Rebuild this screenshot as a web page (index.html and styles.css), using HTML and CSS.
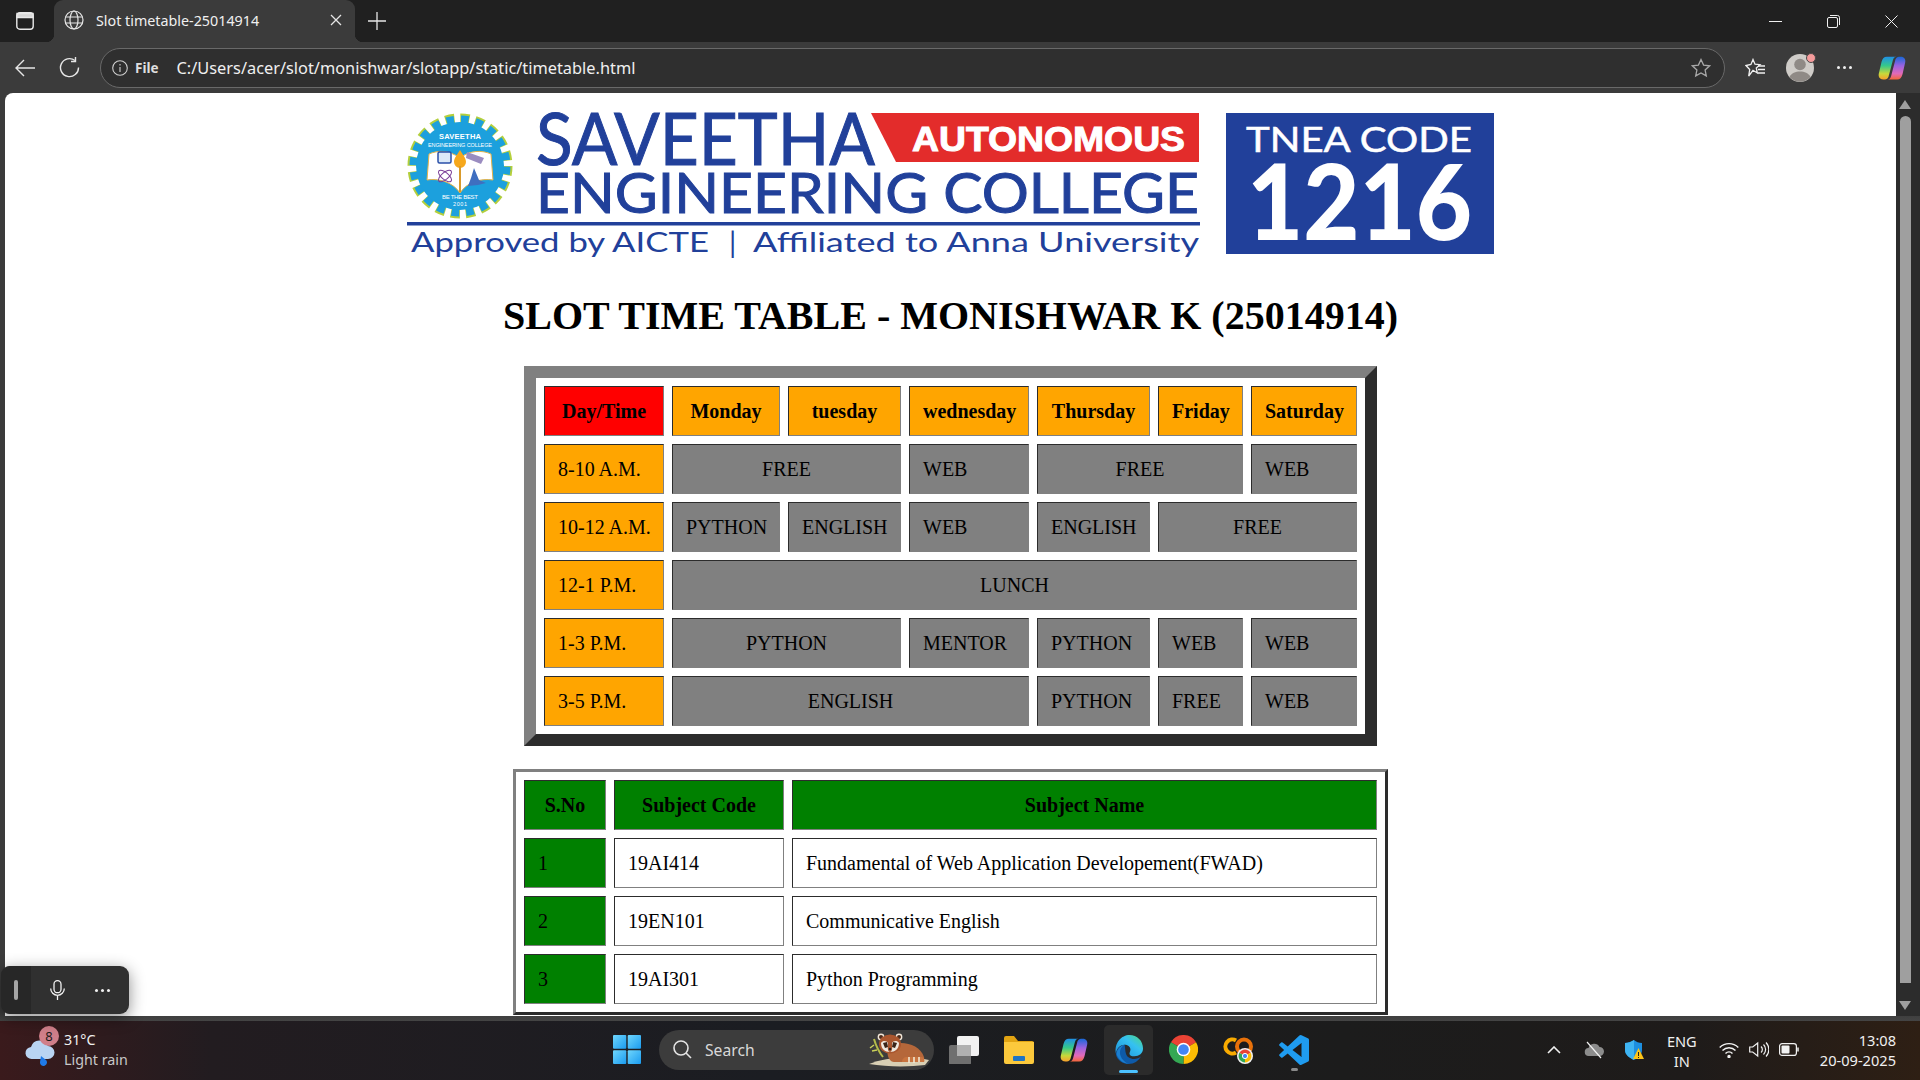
FILE: index.html
```html
<!DOCTYPE html>
<html lang="en">
<head>
  <meta charset="UTF-8" />
  <title>Slot timetable-25014914</title>
  <link rel="stylesheet" href="styles.css">
</head>
<body>
  <svg class="defs" width="0" height="0">
    <defs>
      <linearGradient id="copilotLeft" x1="0" y1="0" x2="0" y2="1">
        <stop offset="0" stop-color="#1f8fe8"/><stop offset=".4" stop-color="#35c98a"/><stop offset=".75" stop-color="#c8d83a"/><stop offset="1" stop-color="#f8a12c"/>
      </linearGradient>
      <linearGradient id="copilotRight" x1="0" y1="0" x2="0" y2="1">
        <stop offset="0" stop-color="#1668d8"/><stop offset=".4" stop-color="#9a63e0"/><stop offset=".75" stop-color="#e26ab8"/><stop offset="1" stop-color="#f4663a"/>
      </linearGradient>
      <linearGradient id="edgeTop" x1="0" y1="1" x2="1" y2="0">
        <stop offset="0" stop-color="#1b8fd8"/><stop offset=".6" stop-color="#35c1f1"/><stop offset="1" stop-color="#4fd97a"/>
      </linearGradient>
      <linearGradient id="winTile" x1="0" y1="0" x2="1" y2="1">
        <stop offset="0" stop-color="#6fd6fc"/><stop offset="1" stop-color="#1a9bf0"/>
      </linearGradient>
      <symbol id="copilot" viewBox="0 0 32 32">
        <path fill="url(#copilotLeft)" d="M10 3h11c-2 0-3 1-4 4l-5 19c-1 2-2 3-4 3H6c-4 0-6-3-5-7l3-13c1-4 3-6 6-6z"/>
        <path fill="url(#copilotRight)" d="M22 29H11c2 0 3-1 4-4l5-19c1-2 2-3 4-3h2c4 0 6 3 5 7l-3 13c-1 4-3 6-6 6z"/>
      </symbol>
    </defs>
  </svg>

  <div class="desktop">

    <!-- ================== Tab strip ================== -->
    <header class="tabstrip">
      <svg class="sidebar-btn" width="18" height="18" viewBox="0 0 18 18" fill="none" stroke="#e8e8e8" stroke-width="1.4">
        <rect x=".8" y=".8" width="16.4" height="16.4" rx="3"/>
        <path d="M1 5.500h16M1 1.500h16v4H1z" fill="#d8d8d8"/>
      </svg>
      <div class="tab">
        <svg width="20" height="20" viewBox="0 0 20 20" fill="none" stroke="#e6e6e6" stroke-width="1.2">
          <circle cx="10" cy="10" r="9"/>
          <ellipse cx="10" cy="10" rx="4" ry="9"/>
          <path d="M1.500 7h17M1.500 13h17"/>
        </svg>
        <span class="tab-title">Slot timetable-25014914</span>
        <svg class="tab-close" width="12" height="12" viewBox="0 0 12 12" stroke="#e6e6e6" stroke-width="1.3">
          <path d="M1 1l10 10M11 1L1 11"/>
        </svg>
      </div>
      <svg class="new-tab" width="18" height="18" viewBox="0 0 18 18" stroke="#e6e6e6" stroke-width="1.3">
        <path d="M9 0v18M0 9h18"/>
      </svg>
      <div class="window-btns">
        <svg width="13" height="13" viewBox="0 0 13 13" stroke="#f0f0f0"><path d="M0 6.500h13"/></svg>
        <svg width="13" height="13" viewBox="0 0 13 13" fill="none" stroke="#f0f0f0">
          <rect x=".5" y="2.500" width="10" height="10" rx="1.500"/>
          <path d="M3 .5h7.500a2 2 0 0 1 2 2V10"/>
        </svg>
        <svg width="13" height="13" viewBox="0 0 13 13" stroke="#f0f0f0"><path d="M.5.5l12 12M12.500.5l-12 12"/></svg>
      </div>
    </header>

    <!-- ================== Address bar ================== -->
    <nav class="toolbar">
      <svg class="back" width="20" height="20" viewBox="0 0 20 20" fill="none" stroke="#e6e6e6" stroke-width="1.4">
        <path d="M20 10H1M9 2l-8 8 8 8"/>
      </svg>
      <svg class="reload" width="21" height="21" viewBox="0 0 21 21" fill="none" stroke="#e6e6e6" stroke-width="1.4">
        <path d="M16 3.500A9 9 0 1 0 19.500 10.500"/>
        <path d="M16.500 0v4.500H12"/>
      </svg>
      <div class="address">
        <svg width="16" height="16" viewBox="0 0 16 16" fill="none" stroke="#d0d0d0" stroke-width="1.1">
          <circle cx="8" cy="8" r="7.300"/>
          <path d="M8 7v5M8 4v1.500"/>
        </svg>
        <span class="file-label">File</span>
        <span class="url">C:/Users/acer/slot/monishwar/slotapp/static/timetable.html</span>
        <svg class="star" width="20" height="20" viewBox="0 0 20 20" fill="none" stroke="#a8a8a8" stroke-width="1.3">
          <path d="M10 1.500l2.600 5.600 6 .7-4.500 4.100 1.200 6L10 15l-5.300 2.900 1.200-6L1.400 7.800l6-.7z"/>
        </svg>
      </div>
      <svg class="favs" width="20" height="20" viewBox="0 0 20 20" fill="none" stroke="#f0f0f0" stroke-width="1.3">
        <path d="M8 1.500l2 4.700 5 .5-3.700 3.300 1 5L8 12.300 3.700 18l1-6.500L1 7.500l4.900-1z"/>
        <path d="M13 8h7M13 11.500h7M13 15h7"/>
      </svg>
      <div class="avatar">
        <svg width="28" height="28" viewBox="0 0 28 28">
          <circle cx="14" cy="14" r="14" fill="#cfccc8"/>
          <circle cx="14" cy="10.500" r="5.800" fill="#8f8a86"/>
          <path d="M3.500 23c2-4 6-5.500 10.500-5.500S22.500 19 24.500 23A14 14 0 0 1 3.500 23z" fill="#8f8a86"/>
        </svg>
        <span class="avatar-dot"></span>
      </div>
      <div class="more-dots"><i></i><i></i><i></i></div>
      <svg class="copilot-btn" width="28" height="28"><use href="#copilot"/></svg>
    </nav>

    <div class="browser-body">
      <main class="page">
        <svg class="banner" width="1087" height="165" viewBox="0 -15 1087 165">
          <!-- college seal -->
          <circle cx="53" cy="58" r="47" fill="none" stroke="#b4cf3c" stroke-width="11" stroke-dasharray="9 5.760"/>
          <circle cx="53" cy="58" r="46" fill="none" stroke="#1ca0dd" stroke-width="9" stroke-dasharray="7.500 6.950" stroke-dashoffset="-.7"/>
          <circle cx="53" cy="58" r="44" fill="#1ca0dd"/>
          <path d="M22 46c9-4 20-4 31 4 10-8 22-8 31-4l2 26c-12-2-26 2-33 13-7-11-22-15-33-13z" fill="#fff" stroke="#e3b34a"/>
          <rect x="31" y="44" width="13" height="11" rx="1.500" fill="#dbe9f8" stroke="#2a4fa8" stroke-width="1.500"/>
          <path d="M60 44l17 6-3 6-15-6z" fill="#9a8cc0"/>
          <ellipse cx="38" cy="68" rx="8" ry="3.500" fill="none" stroke="#7b3f98" transform="rotate(40 38 68)"/>
          <ellipse cx="38" cy="68" rx="8" ry="3.500" fill="none" stroke="#7b3f98" transform="rotate(-40 38 68)"/>
          <path d="M67 60l5 12 7 3-8 2-10 1 3-8z" fill="#3f6fc0"/>
          <path d="M53 42c3 5 6 8 6 12a6 6 0 0 1-12 0c0-4 3-7 6-12z" fill="#f6a81c"/>
          <rect x="52" y="58" width="2" height="26" fill="#d99a2b"/>
          <text class="seal-text" x="53" y="31" text-anchor="middle" font-size="7.500" font-weight="700" textLength="42">SAVEETHA</text>
          <text class="seal-text" x="53" y="39" text-anchor="middle" font-size="5.500" textLength="64">ENGINEERING COLLEGE</text>
          <text class="seal-text" x="53" y="91" text-anchor="middle" font-size="6" textLength="36">BE THE BEST</text>
          <text class="seal-text" x="53" y="98" text-anchor="middle" font-size="5.500" textLength="14">2001</text>

          <!-- wordmark -->
          <text class="mark" x="129" y="57" font-size="72" textLength="339" lengthAdjust="spacingAndGlyphs">SAVEETHA</text>
          <polygon points="464,5 792,5 792,54 489,54" fill="#e32c2b"/>
          <text class="mark-red" x="505" y="43" font-size="35" textLength="273" lengthAdjust="spacingAndGlyphs">AUTONOMOUS</text>
          <text class="mark" x="129" y="105" font-size="56" textLength="663" lengthAdjust="spacingAndGlyphs">ENGINEERING COLLEGE</text>
          <rect x="0" y="114" width="793" height="3.500" fill="#21409a"/>
          <text class="mark-thin" x="4" y="144" font-size="26" textLength="298" lengthAdjust="spacingAndGlyphs">Approved by AICTE</text>
          <text class="mark-thin" x="322" y="145" font-size="29">|</text>
          <text class="mark-thin" x="346" y="144" font-size="26" textLength="446" lengthAdjust="spacingAndGlyphs">Affiliated to Anna University</text>

          <!-- code box -->
          <rect x="819" y="5" width="268" height="141" fill="#21409a"/>
          <text class="code-small" x="839" y="44" font-size="35" textLength="226" lengthAdjust="spacingAndGlyphs">TNEA CODE</text>
          <text class="code-big" x="840" y="132" font-size="104" textLength="225" lengthAdjust="spacingAndGlyphs">1216</text>
        </svg>

        <h1 class="title">SLOT TIME TABLE - MONISHWAR K (25014914)</h1>

        <!-- ================== Time table ================== -->
        <table class="slots">
          <colgroup>
            <col class="c-day"><col class="c-mon"><col class="c-tue"><col class="c-wed"><col class="c-thu"><col class="c-fri"><col class="c-sat">
          </colgroup>
          <tr>
            <th class="red">Day/Time</th>
            <th class="orange">Monday</th>
            <th class="orange">tuesday</th>
            <th class="orange">wednesday</th>
            <th class="orange">Thursday</th>
            <th class="orange">Friday</th>
            <th class="orange">Saturday</th>
          </tr>
          <tr>
            <td class="orange">8-10 A.M.</td>
            <td class="gray mid" colspan="2">FREE</td>
            <td class="gray">WEB</td>
            <td class="gray mid" colspan="2">FREE</td>
            <td class="gray">WEB</td>
          </tr>
          <tr>
            <td class="orange">10-12 A.M.</td>
            <td class="gray">PYTHON</td>
            <td class="gray">ENGLISH</td>
            <td class="gray">WEB</td>
            <td class="gray">ENGLISH</td>
            <td class="gray mid" colspan="2">FREE</td>
          </tr>
          <tr>
            <td class="orange">12-1 P.M.</td>
            <td class="gray mid" colspan="6">LUNCH</td>
          </tr>
          <tr>
            <td class="orange">1-3 P.M.</td>
            <td class="gray mid" colspan="2">PYTHON</td>
            <td class="gray">MENTOR</td>
            <td class="gray">PYTHON</td>
            <td class="gray">WEB</td>
            <td class="gray">WEB</td>
          </tr>
          <tr>
            <td class="orange">3-5 P.M.</td>
            <td class="gray mid" colspan="3">ENGLISH</td>
            <td class="gray">PYTHON</td>
            <td class="gray">FREE</td>
            <td class="gray">WEB</td>
          </tr>
        </table>

        <!-- ================== Subject list ================== -->
        <table class="subjects">
          <colgroup>
            <col class="c-sno"><col class="c-code"><col class="c-name">
          </colgroup>
          <tr>
            <th class="green">S.No</th>
            <th class="green">Subject Code</th>
            <th class="green">Subject Name</th>
          </tr>
          <tr>
            <td class="green">1</td>
            <td>19AI414</td>
            <td>Fundamental of Web Application Developement(FWAD)</td>
          </tr>
          <tr>
            <td class="green">2</td>
            <td>19EN101</td>
            <td>Communicative English</td>
          </tr>
          <tr>
            <td class="green">3</td>
            <td>19AI301</td>
            <td>Python Programming</td>
          </tr>
        </table>
      </main>

      <div class="scrollbar">
        <span class="arrow-up"></span>
        <span class="thumb"></span>
        <span class="arrow-down"></span>
      </div>
    </div>

    <!-- ================== Taskbar ================== -->
    <footer class="taskbar">
      <div class="weather">
        <div class="weather-icon">
          <svg width="30" height="28" viewBox="0 0 30 28">
            <path d="M7 20a6 6 0 0 1-1-12 9 9 0 0 1 17-1 6.500 6.500 0 0 1 0 13z" fill="#b9d4f2"/>
            <path d="M16 17l5 4a3.500 3.500 0 1 1-6 2z" fill="#1f7ae8"/>
          </svg>
          <span class="badge">8</span>
        </div>
        <div class="weather-text">
          <span>31°C</span>
          <span class="weather-sub">Light rain</span>
        </div>
      </div>

      <div class="apps">
        <svg class="app-win" width="28" height="29" viewBox="0 0 28 29" fill="url(#winTile)">
          <rect width="13.300" height="13.800" rx="1"/><rect x="14.700" width="13.300" height="13.800" rx="1"/>
          <rect y="15.200" width="13.300" height="13.800" rx="1"/><rect x="14.700" y="15.200" width="13.300" height="13.800" rx="1"/>
        </svg>
        <div class="search-pill">
          <svg width="19" height="19" viewBox="0 0 19 19" fill="none" stroke="#e4e4e4" stroke-width="1.600">
            <circle cx="8" cy="8" r="7"/><path d="M13 13l5 5"/>
          </svg>
          <span class="search-label">Search</span>
          <svg class="panda" width="62" height="34" viewBox="0 0 62 34">
            <path d="M6 6c2 7 5 13 9 18" stroke="#b5bb4a" stroke-width="2" fill="none"/>
            <path d="M6 12l-4 3M9 17l-5 1" stroke="#c9cf5a" stroke-width="1.500"/>
            <path d="M1 31c14-6 42-9 60-4l-4 5c-16 2-38 2-56-1z" fill="#d9cfb4"/>
            <path d="M22 12c12-5 30-1 34 12 1 3-2 5-5 5H26c-6 0-9-12-4-17z" fill="#b5673a"/>
            <path d="M34 29c0-3 2-5 5-5h14c3 0 4 3 3 5z" fill="#c9743f"/>
            <path d="M41 24v6M46 24v6M51 24v5" stroke="#f0e6d2" stroke-width="1.600"/>
            <circle cx="13" cy="4" r="3.400" fill="#f0e6d8"/><circle cx="31" cy="4" r="3.400" fill="#f0e6d8"/>
            <circle cx="13" cy="4" r="2" fill="#4a2a1a"/><circle cx="31" cy="4" r="2" fill="#4a2a1a"/>
            <ellipse cx="22" cy="11" rx="11" ry="9.500" fill="#a9562e"/>
            <path d="M13 10c2-3 6-2 7 0 0 4-1 8 2 9-5 0-9-3-9-9zM31 10c-2-3-6-2-7 0 0 4 1 8-2 9 5 0 9-3 9-9z" fill="#efe9df"/>
            <path d="M15 10l4-1 1 5-3 1zM29 10l-4-1-1 5 3 1z" fill="#3a2418"/>
            <circle cx="22" cy="16" r="1.300" fill="#222"/>
          </svg>
        </div>
        <svg class="app-view" width="30" height="28" viewBox="0 0 30 28">
          <rect x="0" y="9" width="22" height="20" rx="2" fill="#6f6f6f"/>
          <rect x="8" y="0" width="22" height="20" rx="2" fill="#f2f2f2"/>
          <rect x="8" y="9" width="14" height="11" fill="#b0b0b0"/>
        </svg>
        <svg class="app-files" width="30" height="28" viewBox="0 0 30 28">
          <path d="M0 2a2 2 0 0 1 2-2h8l4 5h14a2 2 0 0 1 2 2v3H0z" fill="#e2a412"/>
          <path d="M0 6h30v20a2 2 0 0 1-2 2H2a2 2 0 0 1-2-2z" fill="#fcc93c"/>
          <rect x="9" y="20" width="12" height="5" rx="1" fill="#1f74c4"/>
        </svg>
        <svg class="app-copilot" width="28" height="28"><use href="#copilot"/></svg>
        <div class="app-edge">
          <svg width="31" height="31" viewBox="0 0 32 32">
            <path d="M3 20C1 9 9 1 17 1c8 0 14 6 14 14 0 5-4 8-9 8-3 0-5-1-5-3 0-1 1-2 1-4 0-3-3-5-6-5-5 0-8 4-9 9z" fill="url(#edgeTop)"/>
            <path d="M12 11c-6 1-9 6-9 10 1 6 7 10 13 10 6 0 10-3 13-8-3 3-9 4-13 1-4-3-3-9-4-13z" fill="#0e5aa8"/>
            <path d="M12 11c-4 2-6 7-4 12 1 3 4 6 8 8-5-1-9-3-12-9-1-5 3-10 8-11z" fill="#1b7fd0"/>
          </svg>
          <span class="run-bar"></span>
        </div>
        <svg class="app-chrome" width="29" height="29" viewBox="0 0 30 30">
          <path d="M15 15L2 7.500A15 15 0 0 1 28 7.500z" fill="#ea4335"/>
          <path d="M15 15L28 7.500A15 15 0 0 1 15 30z" fill="#fbbc04"/>
          <path d="M15 15L15 30A15 15 0 0 1 2 7.500z" fill="#34a853"/>
          <circle cx="15" cy="15" r="7" fill="#fff"/>
          <circle cx="15" cy="15" r="5.500" fill="#4285f4"/>
        </svg>
        <div class="app-colab">
          <svg width="31" height="30" viewBox="0 0 31 30">
            <path d="M13 5.500a7 7 0 1 0 0 12" fill="none" stroke="#f9ab00" stroke-width="4"/>
            <circle cx="21" cy="11.500" r="7" fill="none" stroke="#e8710a" stroke-width="4"/>
            <circle cx="22" cy="21" r="8" fill="#f2f2f2"/>
            <path d="M22 21l-5.600-3.200A6.500 6.500 0 0 1 27.600 17.800z" fill="#ea4335"/>
            <path d="M22 21l5.600-3.200A6.500 6.500 0 0 1 22 27.500z" fill="#fbbc04"/>
            <path d="M22 21v6.500a6.500 6.500 0 0 1-5.600-9.700z" fill="#34a853"/>
            <circle cx="22" cy="21" r="2.600" fill="#4285f4" stroke="#fff"/>
          </svg>
        </div>
        <div class="app-code">
          <svg width="30" height="30" viewBox="0 0 100 100">
            <path fill="#1f9cf0" d="M96 11L75 1a6 6 0 0 0-7 1L29 38 12 25a4 4 0 0 0-5 0l-5 5a4 4 0 0 0 0 6l15 14L2 64a4 4 0 0 0 0 6l5 5a4 4 0 0 0 5 0l17-13 39 36a6 6 0 0 0 7 1l21-10a6 6 0 0 0 4-6V17a6 6 0 0 0-4-6zM75 73L45 50l30-23z"/>
          </svg>
          <span class="open-dot"></span>
        </div>
      </div>

      <div class="tray">
        <svg width="14" height="8" viewBox="0 0 14 8" fill="none" stroke="#f0f0f0" stroke-width="1.600"><path d="M1 7l6-6 6 6"/></svg>
        <svg class="tray-cloud" width="20" height="18" viewBox="0 0 20 18">
          <path d="M5 15a4 4 0 0 1-.5-8 6 6 0 0 1 11-1 4.500 4.500 0 0 1 0 9z" fill="#8c8c8c"/>
          <path d="M3 1l14 16" stroke="#f2f2f2" stroke-width="1.200"/>
        </svg>
        <svg class="tray-shield" width="19" height="20" viewBox="0 0 19 20">
          <path d="M9 0c2 2 5 3 8 3v7c0 5-4 8-8 10-4-2-9-5-9-10V3c3 0 6-1 9-3z" fill="#1d8fe0"/>
          <path d="M9 0v20c-4-2-9-5-9-10V3c3 0 6-1 9-3z" fill="#3fb4f2"/>
          <path d="M13.500 8l5.500 11H8z" fill="#fcc419"/>
          <path d="M13.500 12v4M13.500 17v1" stroke="#222"/>
        </svg>
        <div class="lang"><span>ENG</span><span>IN</span></div>
        <svg class="tray-wifi" width="20" height="16" viewBox="0 0 20 16" fill="none" stroke="#f2f2f2" stroke-width="1.400">
          <path d="M.7 5.500a13 13 0 0 1 18.600 0M3.500 8.500a9 9 0 0 1 13 0M6.500 11.500a5 5 0 0 1 7 0"/>
          <circle cx="10" cy="14.500" r="1" fill="#f2f2f2"/>
        </svg>
        <svg class="tray-sound" width="20" height="17" viewBox="0 0 20 17" fill="none" stroke="#f2f2f2" stroke-width="1.200">
          <path d="M.7 6v5h3l5 4V2l-5 4z"/>
          <path d="M12 5.500a4 4 0 0 1 0 6M14.500 3.500a7 7 0 0 1 0 10M17 1.500a10 10 0 0 1 0 14"/>
        </svg>
        <svg class="tray-battery" width="20" height="13" viewBox="0 0 20 13" fill="none" stroke="#f2f2f2" stroke-width="1.200">
          <rect x=".6" y=".6" width="16.800" height="11.800" rx="2.500"/>
          <rect x="2.500" y="2.500" width="8" height="8" rx="1" fill="#f2f2f2" stroke="none"/>
          <path d="M19 4.500v4" stroke-width="1.500"/>
        </svg>
        <div class="clock"><span>13:08</span><span>20-09-2025</span></div>
      </div>
    </footer>

    <!-- floating voice access bar -->
    <div class="voice-bar">
      <div class="voice-grip"><span></span></div>
      <svg class="voice-mic" width="15" height="20" viewBox="0 0 15 20" fill="none" stroke="#f2f2f2" stroke-width="1.300">
        <rect x="4" y=".7" width="7" height="12" rx="3.500"/>
        <path d="M.7 8.500a6.800 6.800 0 0 0 13.600 0M7.500 15.500V20"/>
      </svg>
      <div class="more-dots voice-dots"><i></i><i></i><i></i></div>
    </div>
  </div>
</body>
</html>
```

FILE: styles.css
```css
html,
body {
  margin: 0;
  height: 100%;
  overflow: hidden;
}
body {
  font-family: "Noto Sans", "Open Sans", sans-serif;
  background: #202020;
  color: #f0f0f0;
}
svg {
  display: block;
  flex: none;
}
.defs {
  position: absolute;
}
.desktop {
  position: relative;
  display: flex;
  flex-direction: column;
  height: 1080px;
}

/* tab strip */
.tabstrip {
  display: flex;
  align-items: center;
  height: 42px;
  padding-left: 16px;
  background: #202020;
}
.tab {
  position: relative;
  display: flex;
  align-items: center;
  align-self: flex-end;
  box-sizing: border-box;
  width: 301px;
  height: 42px;
  margin-left: 20px;
  padding: 0 13px 2px 10px;
  background: #3b3b3b;
  border-radius: 9px 9px 0 0;
}
.tab::before,
.tab::after {
  content: "";
  position: absolute;
  bottom: 0;
  width: 8px;
  height: 8px;
}
.tab::before {
  left: -8px;
  background: radial-gradient(circle at 0 0, #202020 8px, #3b3b3b 8.500px);
}
.tab::after {
  right: -8px;
  background: radial-gradient(circle at 100% 0, #202020 8px, #3b3b3b 8.500px);
}
.tab-title {
  margin-left: 12px;
  font-size: 14.300px;
  white-space: nowrap;
}
.tab-close {
  margin-left: auto;
}
.new-tab {
  margin-left: 13px;
}
.window-btns {
  display: flex;
  gap: 45px;
  margin-left: auto;
  padding-right: 22px;
}

/* address bar */
.toolbar {
  display: flex;
  align-items: center;
  height: 51px;
  padding-left: 15px;
  background: #3b3b3b;
}
.reload {
  margin-left: 24px;
}
.address {
  display: flex;
  align-items: center;
  box-sizing: border-box;
  width: 1625px;
  height: 40px;
  margin-left: 20px;
  padding: 0 13px 0 11px;
  border: 1px solid #696969;
  border-radius: 20px;
  background: #2f2f2f;
}
.file-label {
  margin-left: 7px;
  font-size: 13.500px;
  font-weight: 700;
  color: #dedede;
}
.url {
  margin-left: 18px;
  font-size: 16.350px;
  white-space: nowrap;
}
.star {
  margin-left: auto;
}
.favs {
  margin-left: 20px;
}
.avatar {
  position: relative;
  margin-left: 21px;
}
.avatar-dot {
  position: absolute;
  top: -1px;
  right: -2px;
  width: 8px;
  height: 8px;
  border: 1px solid #4a4a4a;
  border-radius: 50%;
  background: #f59b9b;
}
.more-dots {
  display: flex;
  gap: 3px;
  margin-left: 23px;
}
.more-dots i {
  width: 3px;
  height: 3px;
  border-radius: 50%;
  background: #f0f0f0;
}
.copilot-btn {
  margin-left: 26px;
}

/* page */
.browser-body {
  display: flex;
  flex: none;
  height: 928px;
  padding-left: 5px;
  background: linear-gradient(#3b3b3b 99%, #444);
}
.page {
  flex: none;
  width: 1891px;
  height: 923px;
  overflow: hidden;
  background: #fff;
  color: #000;
  border-top-left-radius: 8px;
  font-family: "Liberation Serif", serif;
  font-size: 20px;
}
.banner {
  margin: 0 auto;
}
.seal-text {
  fill: #fff;
  font-family: "Liberation Sans", sans-serif;
}
.mark {
  fill: #21409a;
  stroke: #21409a;
  stroke-width: 1px;
  font-family: "Lato", sans-serif;
  font-weight: 400;
}
.mark-thin {
  fill: #21409a;
  font-family: "Lato", sans-serif;
  font-weight: 400;
}
.mark-red {
  fill: #fff;
  stroke: #fff;
  stroke-width: 1px;
  font-family: "Liberation Sans", sans-serif;
  font-weight: 700;
}
.code-small {
  fill: #fff;
  stroke: #fff;
  stroke-width: 0.5px;
  font-family: "Lato", sans-serif;
  font-weight: 400;
}
.code-big {
  fill: #fff;
  font-family: "Lato", sans-serif;
  font-weight: 900;
}
.title {
  margin: 35px 0 27px;
  font-size: 40px;
  line-height: 46px;
  text-align: center;
}

/* tables */
table {
  margin: 0 auto;
  border-spacing: 8px;
  table-layout: fixed;
  border-style: outset;
  border-color: #808080;
}
th,
td {
  box-sizing: border-box;
  height: 50px;
  padding: 0 13px;
  border: 1px inset #808080;
  text-align: left;
  white-space: nowrap;
}
th,
.mid {
  text-align: center;
}
.slots {
  width: 853px;
  border-width: 12px;
}
.subjects {
  width: 875px;
  margin-top: 23px;
  border-width: 3px;
}
.c-day { width: 120px; }
.c-mon { width: 108px; }
.c-tue { width: 113px; }
.c-wed { width: 120px; }
.c-thu { width: 113px; }
.c-fri { width: 85px; }
.c-sat { width: 106px; }
.c-sno { width: 82px; }
.c-code { width: 170px; }
.c-name { width: 585px; }
.red { background: #f00; }
.orange { background: #ffa500; }
.gray { background: #808080; }
.green { background: #008000; }

/* scrollbar */
.scrollbar {
  position: relative;
  flex: 1;
  height: 923px;
  background: #2c2c2c;
}
.thumb {
  position: absolute;
  top: 23px;
  bottom: 33px;
  left: 4px;
  width: 11px;
  background: #9f9f9f;
  border-radius: 6px 6px 0 0;
}
.arrow-up,
.arrow-down {
  position: absolute;
  left: 3px;
  width: 0;
  height: 0;
  border-left: 6.500px solid transparent;
  border-right: 6.500px solid transparent;
}
.arrow-up {
  top: 7px;
  border-bottom: 9px solid #9f9f9f;
}
.arrow-down {
  bottom: 6px;
  border-top: 9px solid #9f9f9f;
}

/* taskbar */
.taskbar {
  display: flex;
  align-items: center;
  flex: 1;
  padding-bottom: 2px;
  background: linear-gradient(90deg, #3a1a1c 0, #221c20 11%, #1b1d22 40%, #1c1c1c 70%, #1e1b1a 88%, #2e1f14 100%);
}
.weather {
  display: flex;
  align-items: center;
  box-sizing: border-box;
  width: 613px;
  padding-left: 25px;
}
.weather-icon {
  position: relative;
  margin-top: 6px;
}
.badge {
  position: absolute;
  top: -13px;
  left: 14px;
  width: 20px;
  height: 20px;
  border-radius: 50%;
  background: #d07f8a;
  color: #1b1b1b;
  font-size: 13px;
  line-height: 20px;
  text-align: center;
}
.weather-text {
  display: flex;
  flex-direction: column;
  margin-left: 9px;
  font-size: 14.300px;
  line-height: 20px;
}
.weather-sub {
  color: #c8c8c8;
}
.apps {
  display: flex;
  align-items: center;
}
.search-pill {
  display: flex;
  align-items: center;
  box-sizing: border-box;
  width: 275px;
  height: 40px;
  margin-left: 18px;
  padding: 0 4px 0 14px;
  border-radius: 20px;
  background: #3c3c3c;
}
.search-label {
  margin-left: 13px;
  font-size: 15.700px;
  color: #d8d8d8;
}
.panda {
  margin-left: auto;
}
.app-view { margin-left: 15px; }
.app-files { margin-left: 25px; }
.app-copilot { margin-left: 26px; }
.app-edge {
  position: relative;
  display: flex;
  justify-content: center;
  align-items: center;
  width: 49px;
  height: 50px;
  margin-left: 16px;
  border-radius: 5px;
  background: #2b2b2b;
}
.run-bar {
  position: absolute;
  bottom: 2px;
  left: 15px;
  width: 19px;
  height: 3px;
  border-radius: 2px;
  background: #4cc2ff;
}
.app-chrome { margin-left: 16px; }
.app-colab { margin-left: 25px; }
.app-code {
  position: relative;
  margin-left: 25px;
}
.open-dot {
  position: absolute;
  bottom: -6px;
  left: 12px;
  width: 7px;
  height: 3px;
  border-radius: 2px;
  background: #8a8a8a;
}
.tray {
  display: flex;
  align-items: center;
  margin-left: auto;
  padding-right: 24px;
  font-size: 14.600px;
  line-height: 20px;
}
.tray-cloud { margin-left: 23px; }
.tray-shield { margin-left: 21px; }
.lang {
  display: flex;
  flex-direction: column;
  align-items: center;
  width: 34px;
  margin: 2px 0 0 21px;
}
.tray-wifi { margin-left: 20px; }
.tray-sound { margin-left: 10px; }
.tray-battery { margin-left: 10px; }
.clock {
  display: flex;
  flex-direction: column;
  align-items: flex-end;
  margin-left: 21px;
}

/* floating voice bar */
.voice-bar {
  position: absolute;
  top: 966px;
  left: 1px;
  display: flex;
  align-items: center;
  width: 128px;
  height: 48px;
  border-radius: 9px;
  background: #303030;
  box-shadow: 0 4px 16px rgba(0, 0, 0, 0.45);
  overflow: hidden;
}
.voice-grip {
  display: flex;
  align-items: center;
  justify-content: center;
  width: 30px;
  height: 100%;
  background: #272727;
}
.voice-grip span {
  width: 4px;
  height: 20px;
  border-radius: 2px;
  background: #a5a5a5;
}
.voice-mic {
  margin-left: 19px;
}
.voice-dots {
  margin-left: 30px;
}
```
